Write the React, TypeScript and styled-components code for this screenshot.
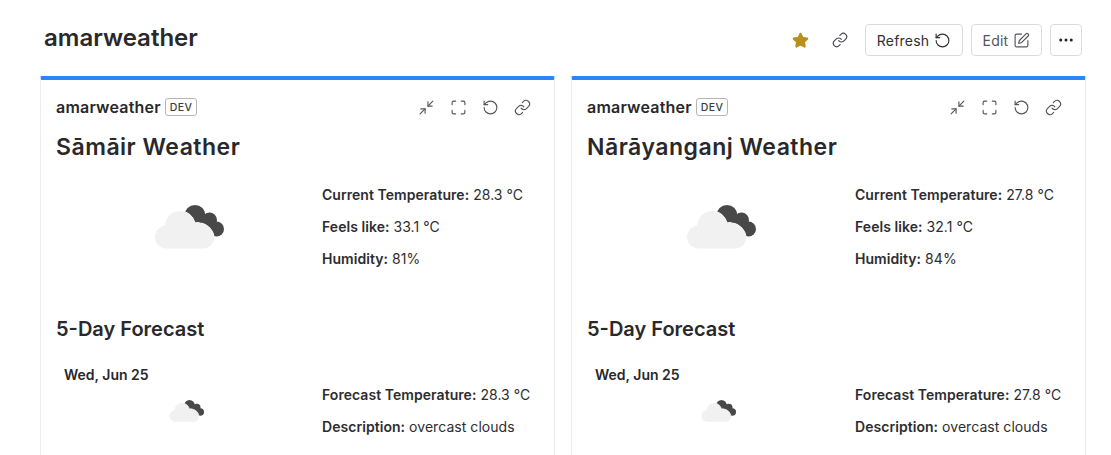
import React from "react";
import styled, { createGlobalStyle } from "styled-components";
import { Star, Link, RotateCcw, SquarePen, Ellipsis, Minimize2, Maximize } from "lucide-react";

const Global = createGlobalStyle`
  html, body { margin: 0; padding: 0; background: #fff; }
  body { width: 1111px; height: 455px; overflow: hidden; font-family: "Inter", "Liberation Sans", sans-serif; color: #29282b; }
`;
const Page = styled.div`
  width: 1111px; height: 455px; overflow: hidden; display: flex; flex-direction: column;
`;
const Header = styled.header`
  height: 76px; flex: none; display: flex; align-items: flex-start; justify-content: space-between;
  padding: 24px 29px 0 44px; box-sizing: border-box;
`;
const Title = styled.h1`
  margin: 0; font: 600 24px/28px "Inter", sans-serif; letter-spacing: 0; color: #29282b;
`;
const Actions = styled.div`
  display: flex; align-items: center; color: #49454f;
`;
const IconSlot = styled.span<{ $w: number }>`
  width: ${p => p.$w}px; display: flex; justify-content: center; align-items: center;
`;
const Button = styled.button<{ $w: number; $ml: number; $muted?: boolean }>`
  width: ${p => p.$w}px; height: 32px; margin-left: ${p => p.$ml}px; box-sizing: border-box;
  display: flex; align-items: center; justify-content: center; gap: 5px; padding: 0;
  background: #fff; border: 1px solid #dcdcdc; border-radius: 4px;
  font: 400 14px "Inter", sans-serif; letter-spacing: 0.2px; color: ${p => (p.$muted ? "#55555c" : "#2f2f35")};
`;
const Cards = styled.main`
  display: flex; gap: 16px; padding: 0 25px 0 40px; align-items: flex-start;
`;
const Card = styled.section`
  width: 515px; height: 420px; box-sizing: border-box; flex: none;
  border: 1px solid #ececec; border-top: 4px solid #2b85ff; border-radius: 2px 2px 0 0;
  padding: 0 15px;
`;
const CardTop = styled.div`
  height: 28px; padding-top: 13px; display: flex; align-items: center; justify-content: space-between;
`;
const CardName = styled.div`
  display: flex; align-items: center; gap: 4px;
  font: 600 16px "Inter", sans-serif; letter-spacing: 0.2px; color: #29282b;
`;
const Badge = styled.span`
  height: 18px; box-sizing: border-box; padding: 0 4px; display: flex; align-items: center;
  border: 1px solid #b5b5b5; border-radius: 3px;
  font: 500 10.5px "Inter", sans-serif; letter-spacing: 0.45px; color: #3b3b3b;
`;
const CardIcons = styled.div`
  display: flex; gap: 15px; margin-right: 8px; color: #55555c;
`;
const CityName = styled.h2`
  margin: 11px 0 0; font: 600 23px/30px "Inter", sans-serif; letter-spacing: 0.5px; color: #29282b;
`;
const Row = styled.div<{ $left: number; $mt: number }>`
  display: grid; grid-template-columns: ${p => p.$left}px 1fr; margin-top: ${p => p.$mt}px;
`;
const Facts = styled.div<{ $mt?: number }>`
  display: flex; flex-direction: column; gap: 12px; margin-top: ${p => p.$mt ?? 0}px;
`;
const Fact = styled.div`
  font: 400 14px/20px "Inter", sans-serif; letter-spacing: 0.05px; color: #2d2d30;
  b { font-weight: 600; }
`;
const IconCell = styled.div<{ $pr: number; $pt: number }>`
  display: flex; justify-content: center; padding-top: ${p => p.$pt}px; padding-right: ${p => p.$pr}px;
`;
const Section = styled.h3`
  margin: 47px 0 0; font: 600 20px/26px "Inter", sans-serif; letter-spacing: 0; color: #29282b;
`;
const DayLabel = styled.div`
  margin: 0 0 0 8px; font: 600 14px/18px "Inter", sans-serif; letter-spacing: 0; color: #29282b;
`;

const Cloud = ({ w }: { w: number }) => (
  <svg width={w} height={w * 45 / 70} viewBox="-1 0 70 45" aria-hidden="true">
    <g fill="#484848">
      <circle cx="40" cy="10.5" r="10.5" />
      <circle cx="54.5" cy="15" r="7.5" />
      <circle cx="61.5" cy="24" r="7.5" />
      <circle cx="47" cy="18" r="9" />
      <rect x="42" y="18" width="17" height="13" />
    </g>
    <g fill="#f1f1f1" stroke="#fff" strokeWidth="1.2" paintOrder="stroke">
      <path d="M12 43.5 C5 43.5 0 38.5 0 32 C0 26 5 21 10 20.5 C11 12 17 6 25 6 C32 6 38 11 40 18 C42 17.5 43 17.5 45 18 C52 19 58 24.5 59 32 C59.5 38 55 43.5 48 43.5 Z" />
    </g>
  </svg>
);

const Weather = ({ city, temp, feels, humidity, left }: {
  city: string; temp: string; feels: string; humidity: string; left: number;
}) => (
  <Card>
    <CardTop>
      <CardName>amarweather <Badge>DEV</Badge></CardName>
      <CardIcons>
        <Minimize2 size={17} strokeWidth={1.6} />
        <Maximize size={17} strokeWidth={1.6} />
        <RotateCcw size={17} strokeWidth={1.6} />
        <Link size={17} strokeWidth={1.6} />
      </CardIcons>
    </CardTop>
    <CityName>{city}</CityName>
    <Row $left={left} $mt={23}>
      <IconCell $pr={0} $pt={20}><Cloud w={70} /></IconCell>
      <Facts>
        <Fact><b>Current Temperature:</b> {temp} °C</Fact>
        <Fact><b>Feels like:</b> {feels} °C</Fact>
        <Fact><b>Humidity:</b> {humidity}%</Fact>
      </Facts>
    </Row>
    <Section>5-Day Forecast</Section>
    <Row $left={left} $mt={24}>
      <div>
        <DayLabel>Wed, Jun 25</DayLabel>
        <IconCell $pr={6} $pt={16}><Cloud w={35} /></IconCell>
      </div>
      <Facts $mt={19}>
        <Fact><b>Forecast Temperature:</b> {temp} °C</Fact>
        <Fact><b>Description:</b> overcast clouds</Fact>
      </Facts>
    </Row>
  </Card>
);

export default function App() {
  return (
    <Page>
      <Global />
      <Header>
        <Title>amarweather</Title>
        <Actions>
          <IconSlot $w={26}><Star size={17} fill="#b8901c" color="#b8901c" /></IconSlot>
          <IconSlot $w={54}><Link size={16} strokeWidth={1.7} /></IconSlot>
          <Button $w={98} $ml={-2}>Refresh <RotateCcw size={17} strokeWidth={1.6} /></Button>
          <Button $w={71} $ml={8} $muted>Edit <SquarePen size={17} strokeWidth={1.6} /></Button>
          <Button $w={32} $ml={8}><Ellipsis size={18} strokeWidth={2} color="#222" /></Button>
        </Actions>
      </Header>
      <Cards>
        <Weather city="Sāmāir Weather" temp="28.3" feels="33.1" humidity="81" left={266} />
        <Weather city="Nārāyanganj Weather" temp="27.8" feels="32.1" humidity="84" left={268} />
      </Cards>
    </Page>
  );
}
